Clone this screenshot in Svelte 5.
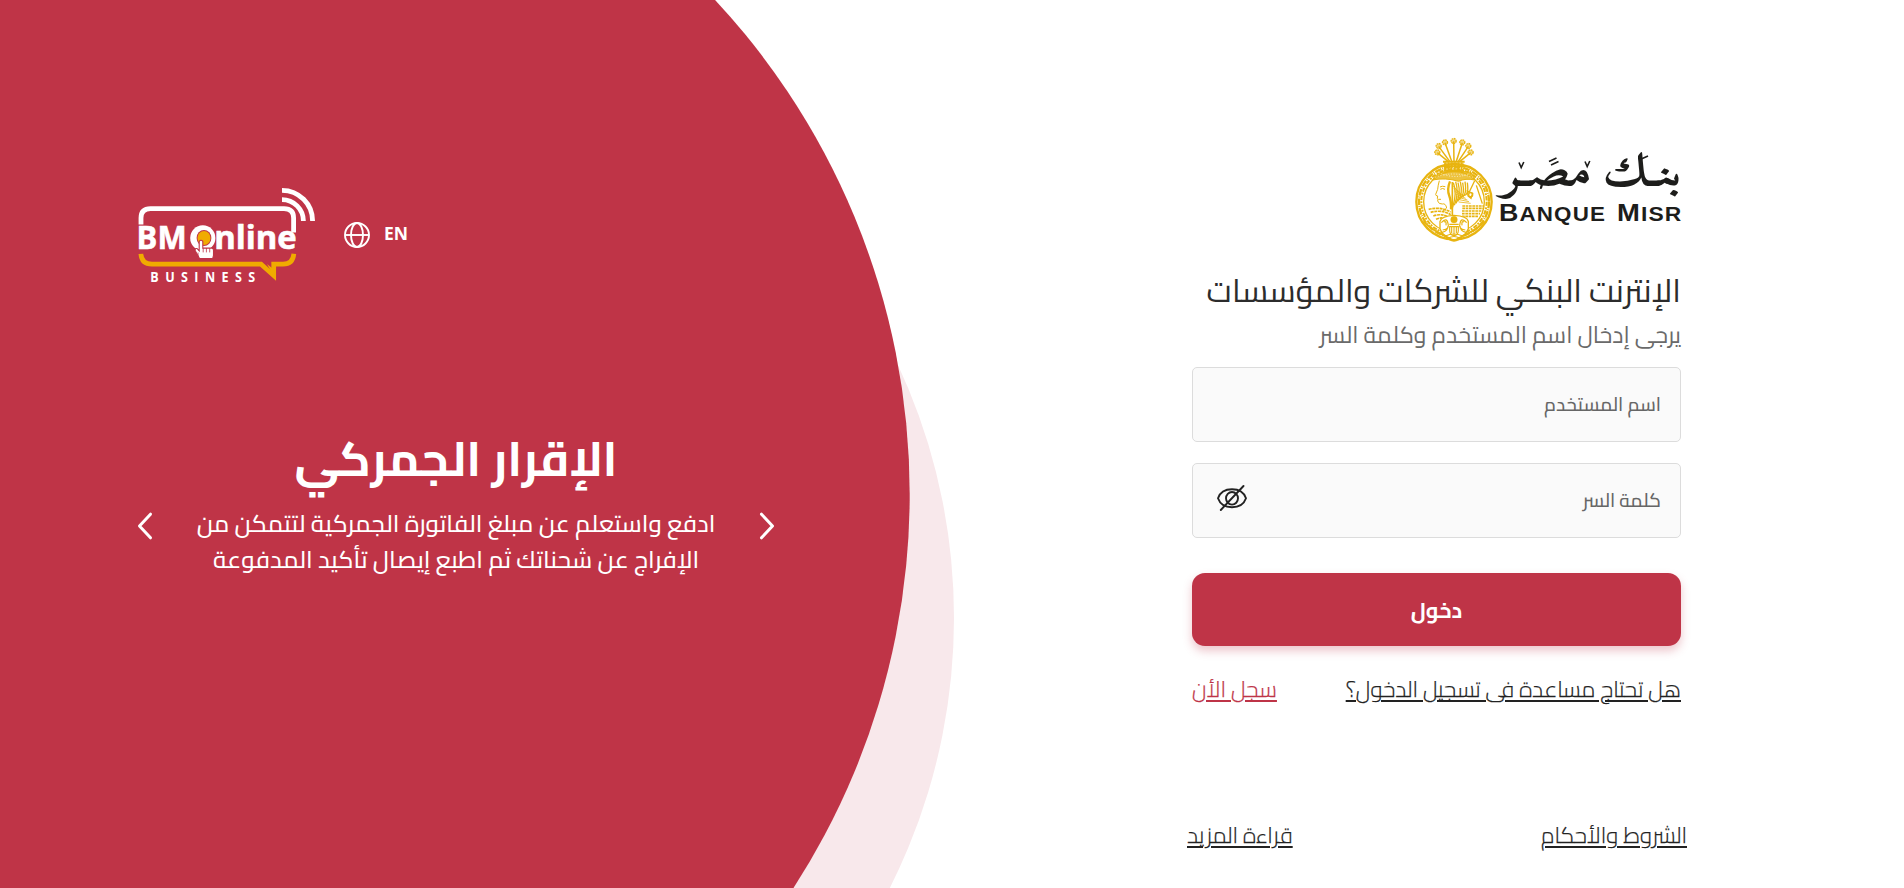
<script>
  let username = $state('');
  let password = $state('');
  let shown = $state(false);

  const flowers = [
    [76, 50, 108, 76], [80, 31, 113, 76], [99, 20, 119, 76], [125, 16, 126, 76],
    [151, 20, 133, 76], [169, 31, 139, 76], [176, 50, 144, 76]
  ];
  const studs = [102, 112, 122, 132, 142, 152];
  const feathers = [0, 1, 2, 3, 4, 5, 6];
</script>

<div class="page">
  <svg class="backdrop" width="1904" height="888" viewBox="0 0 1904 888" aria-hidden="true">
    <circle cx="354" cy="618" r="600" fill="#f8e8eb" />
    <circle cx="184.7" cy="494.3" r="725" fill="#bf3447" />
  </svg>

  <section class="promo">
    <header class="topbar">
      <svg class="online-logo" width="186" height="100" viewBox="0 0 186 100">
        <g fill="none" stroke="#fff" stroke-width="4.8">
          <path d="M7 40.5V34Q7 24.6 16.5 24.6H150Q159.6 24.6 159.6 34V48.5" />
          <path d="M148 6.3A30.6 30.6 0 0 1 178.6 37" />
          <path d="M148 15.6A21.4 21.4 0 0 1 169.4 37" />
        </g>
        <g fill="#fff" stroke="#fff" stroke-width=".6" font-family="Open Sans, sans-serif" font-weight="700">
          <text x="2.6" y="65.4" font-size="32" textLength="50" lengthAdjust="spacingAndGlyphs">BM</text>
          <text x="80.2" y="65.4" font-size="32" textLength="82.5" lengthAdjust="spacingAndGlyphs">nline</text>
        </g>
        <text transform="translate(16.3 97.6) scale(.86 1)" x="0" y="0" fill="#fff" font-family="Open Sans, sans-serif" font-weight="700" font-size="14.6" textLength="122" lengthAdjust="spacing">BUSINESS</text>
        <path d="M6.9 69.8Q7.6 80.2 18 80.2H127L139.7 91.5V80.2H149Q159 80.2 159.8 69.8" fill="none" stroke="#f0ab00" stroke-width="4.7" />
        <path d="M133 80L142 96.4V90L138 84Z" fill="#f0ab00" />
        <ellipse cx="68.8" cy="54" rx="12.6" ry="12.7" fill="#fff" />
        <ellipse cx="70" cy="54" rx="7.4" ry="8" fill="#be3447" />
        <ellipse cx="70" cy="54" rx="6.5" ry="7.1" fill="#f0ab00" />
        <path d="M65.500 74.600 61 66.200q0-2 2-1.700l2.200 2.400V57.400q1.800-2.400 3.600 0v6.700h9.200q1.500.2 1.500 2.400v5l-.8 3.100z" fill="#fff" stroke="#be3447" stroke-width="1.1" />
        <path d="M69.200 64v4.400M72.400 64v4.400M75.700 64v4.400M64 73.600v-5" stroke="#be3447" stroke-width=".8" />
      </svg>

      <button class="lang" type="button">
        <svg width="26" height="26" viewBox="0 0 26 26" fill="none" stroke="#fff" stroke-width="1.9">
          <circle cx="13" cy="13" r="12" />
          <ellipse cx="13" cy="13" rx="6" ry="12" />
          <path d="M1 13H25" />
        </svg>
        <span>EN</span>
      </button>
    </header>

    <div class="carousel">
      <button class="arrow" type="button" aria-label="‹">
        <svg width="18" height="28" viewBox="0 0 18 28"><path d="M14.500 2.200 3.500 14 14.500 25.800" /></svg>
      </button>
      <div class="slide">
        <h2>الإقرار الجمركي</h2>
        <p>ادفع واستعلم عن مبلغ الفاتورة الجمركية لتتمكن من<br />الإفراج عن شحناتك ثم اطبع إيصال تأكيد المدفوعة</p>
      </div>
      <button class="arrow" type="button" aria-label="›">
        <svg width="18" height="28" viewBox="0 0 18 28"><path d="M3.500 2.200 14.500 14 3.500 25.800" /></svg>
      </button>
    </div>
  </section>

  <main class="login">
    <svg class="bank-logo" width="270" height="108" viewBox="0 0 270 108">
      <g transform="scale(.33333)" fill="none" stroke="#e8b410">
        <!-- lotus crown -->
        {#each flowers as [x, y, bx, by]}
          <path d="M{x} {y}L{bx} {by}" stroke-width="4.5" />
          <circle cx={x} cy={y - 1} r="7.5" fill="#e8b410" fill-opacity=".5" stroke-width="4" stroke-dasharray="5 2" />
        {/each}
        <path d="M93 77H158M96 104H156M94 91H158" stroke-width="6" />
        {#each studs as x}
          <path d="M{x - 3} 79V103" stroke-width="5" />
          <circle cx={x} cy="84" r="2.4" stroke-width="2" />
        {/each}
        <!-- ring -->
        <circle cx="126" cy="197" r="113" stroke-width="7" />
        <circle cx="126" cy="197" r="91" stroke-width="4" />
        <circle cx="126" cy="197" r="105" stroke-width="7" stroke-dasharray="20 3 3 3" />
        <circle cx="126" cy="197" r="98" stroke-width="6" stroke-dasharray="13 4 6 3" />
        <!-- headdress -->
        <path d="M62 132Q74 106 108 107H170Q186 112 188 132Q160 126 140 136Q100 124 62 132Z" fill="#e8b410" fill-opacity=".8" stroke-width="3" />
        <path d="M70 124Q120 104 182 124M88 113Q130 130 174 113" stroke="#fff" stroke-width="2" stroke-dasharray="3 5" />
        <!-- profile -->
        <path d="M82 134Q78 148 77 160L71 175Q70 179 77 180L76 187Q79 191 77 195Q80 205 91 204Q101 201 104 216L92 226M84 153Q90 149 100 152M85 160Q91 155 99 160M79 190H87" stroke-width="3" />
        <path d="M114 136Q104 160 112 180Q118 196 117 220" stroke-width="7" />
        <!-- feathers -->
        {#each feathers as i}
          <path d="M{124 + i * 7} {140 - (i % 2) * 3}Q{136 + i * 6} {170 + i * 2} {122 + i * 5} {214 - i * 6}" stroke-width="4" />
          <path d="M{122 + i * 3} {150 + i * 8}L{146 + i * 5} {172 + i * 5}" stroke-width="2.4" />
        {/each}
        <path d="M121 138V238" stroke-width="5" />
        <path d="M188 134 170 172M193 148 211 203M166 165 182 172 177 187 168 180Z" stroke-width="4" />
        <circle cx="176" cy="176" r="6" stroke-width="4" />
        <path d="M151 210H216M151 217H214M150 225H212M150 233H204M150 241H198" stroke-width="5" stroke-dasharray="8 2" />
        <path d="M50 220Q85 211 116 228M56 229Q90 220 116 236M64 240Q90 231 112 244M72 250Q92 241 108 251" stroke-width="5" stroke-dasharray="9 2" />
        <!-- lower medallion -->
        <path d="M84 256Q88 240 126 238Q166 240 169 256V278Q160 300 139 306Q126 316 113 306Q92 300 84 278Z" fill="#fff" stroke-width="4" />
        <circle cx="126" cy="251" r="10" fill="#e8b410" stroke-width="1" />
        <path d="M88 260Q104 242 108 262Q114 280 92 282M164 260Q148 242 144 262Q138 280 160 282M96 258Q104 254 102 268M156 258Q148 254 150 268M90 289Q108 285 108 270M162 289Q144 285 144 270M100 300Q126 288 152 300M108 307Q126 296 144 307" stroke-width="3.6" />
        <path d="M113 272H139V284Q138 298 126 299Q114 298 113 284ZM119 274V292M126 274V296M133 274V292M112 265H140" stroke-width="3.400" />
        <path d="M34 256Q60 282 100 300L113 310Q126 318 139 310L152 300Q194 282 218 256" stroke-width="6" />
      </g>
      <g fill="#1d1d1b">
        <text class="script" x="269.500" y="49" direction="rtl" textLength="181" lengthAdjust="spacingAndGlyphs">بنـك مصـر</text>
        <path d="M107 26.500l2.200 5 2.600-5.500M137 25.500l7.500-3.500M139 29l7.500-3.500M173 25.500l2.200 5 2.600-5.500M227 24l9-4" fill="none" stroke="#1d1d1b" stroke-width="1.600" />
        <g class="latin">
          <text x="87" y="85.300" textLength="107" lengthAdjust="spacingAndGlyphs"><tspan font-size="24">B</tspan><tspan font-size="20">ANQUE</tspan></text>
          <text x="205" y="85.300" textLength="65.500" lengthAdjust="spacingAndGlyphs"><tspan font-size="24">M</tspan><tspan font-size="20">ISR</tspan></text>
        </g>
      </g>
    </svg>

    <h1>الإنترنت البنكي للشركات والمؤسسات</h1>
    <p class="hint">يرجى إدخال اسم المستخدم وكلمة السر</p>

    <form onsubmit={(e) => e.preventDefault()}>
      <label class="field">
        <input type="text" bind:value={username} placeholder="اسم المستخدم" />
      </label>
      <label class="field">
        <input type={shown ? 'text' : 'password'} bind:value={password} placeholder="كلمة السر" />
        <button class="eye" type="button" aria-label="◉" onclick={() => (shown = !shown)}>
          <svg width="30" height="28" viewBox="0 0 30 28" fill="none" stroke="#222" stroke-width="1.900" stroke-linecap="round">
            <path d="M1 14.300C3 8.500 8.500 5.300 15 5.300S27 8.500 29 14.300C27 20 21.500 23.300 15 23.300S3 20 1 14.300Z" />
            <ellipse cx="15" cy="14.300" rx="6" ry="6.300" />
            <path d="M3.800 26 26.500 2" />
          </svg>
        </button>
      </label>
      <button class="submit" type="submit"><span>دخول</span></button>
    </form>

    <nav class="links help">
      <a href="#help">هل تحتاج مساعدة فى تسجيل الدخول؟</a>
      <a class="accent" href="#register">سجل الأن</a>
    </nav>
    <nav class="links legal">
      <a href="#terms">الشروط والأحكام</a>
      <a href="#more">قراءة المزيد</a>
    </nav>
  </main>
</div>

<style>
  :global(body) { margin: 0; background: #fff; }
  .page {
    position: relative;
    display: flex;
    width: 1904px;
    height: 888px;
    overflow: hidden;
    font-family: Cairo, 'DejaVu Sans', sans-serif;
    color: #222;
  }
  .backdrop { position: absolute; inset: 0; }
  button { border: 0; padding: 0; background: none; font: inherit; color: inherit; cursor: pointer; }
  h1, h2, p { margin: 0; }

  .promo { position: relative; width: 640px; padding: 184px 0 0 134px; color: #fff; }
  .topbar { display: flex; align-items: center; gap: 24px; height: 100px; }
  .online-logo { flex: none; }
  .lang { display: flex; align-items: center; gap: 14px; margin-top: 2px; font: 700 17.500px/26px 'Open Sans', sans-serif; }
  .lang svg { display: block; }
  .lang span { position: relative; top: -2px; }

  .carousel { display: flex; align-items: center; justify-content: space-between; width: 640px; margin: 139.800px 0 0 2px; }
  .arrow { padding-top: 50px; }
  .arrow svg { display: block; }
  .arrow path { fill: none; stroke: #fff; stroke-width: 3; stroke-linecap: round; stroke-linejoin: round; }
  .slide { direction: rtl; text-align: center; white-space: nowrap; }
  h2 { font-size: 47.800px; line-height: 70px; font-weight: 700; }
  .slide p { margin-top: 12.600px; font-size: 24.100px; line-height: 36px; font-weight: 500; }

  .login { position: relative; direction: rtl; width: 489px; margin-left: 418px; padding-top: 136px; }
  .bank-logo { display: block; direction: ltr; margin-right: -1px; }
  .script { font-family: Amiri, 'Noto Naskh Arabic', 'DejaVu Sans', serif; font-size: 46px; font-weight: 700; word-spacing: -5px; }
  .latin { font-family: 'Liberation Sans', sans-serif; font-weight: 700; letter-spacing: 1px; }
  h1 { margin-top: 24.400px; font-size: 32.200px; line-height: 44px; font-weight: 400; color: #2c2c2c; white-space: nowrap; }
  .hint { margin-top: 4.600px; font-size: 23.050px; line-height: 36px; font-weight: 400; color: #6a6a6a; white-space: nowrap; }

  form { display: flex; flex-direction: column; margin-top: 14px; }
  .field {
    display: flex;
    align-items: center;
    box-sizing: border-box;
    height: 75px;
    margin-bottom: 21px;
    padding: 0 19px 0 24px;
    border: 1px solid #dcdcdc;
    border-radius: 5px;
    background: #fafafa;
  }
  input {
    flex: 1;
    min-width: 0;
    height: 60px;
    padding: 0;
    border: 0;
    outline: 0;
    background: none;
    direction: rtl;
    font: 500 18.900px Cairo, 'DejaVu Sans', sans-serif;
    color: #222;
  }
  input::placeholder { color: #666; opacity: 1; }
  .eye svg { display: block; margin-top: -4px; }
  .submit {
    height: 73px;
    margin-top: 14px;
    border-radius: 13px;
    background: #bf3447;
    box-shadow: 0 5px 10px rgba(190, 52, 71, .28);
    color: #fff;
    font-size: 21.600px;
    font-weight: 700;
  }
  .submit span { display: block; padding-top: 2px; }

  .links { display: flex; justify-content: space-between; font-size: 22.550px; line-height: 40px; font-weight: 300; white-space: nowrap; }
  .links a { color: #222; -webkit-text-stroke: .25px currentColor; text-decoration: underline; text-decoration-thickness: 2px; text-underline-offset: 3px; }
  .links a.accent { color: #be3447; }
  .help { margin-top: 23.300px; }
  .legal { margin: 106px -6px 0 -5px; }
</style>
